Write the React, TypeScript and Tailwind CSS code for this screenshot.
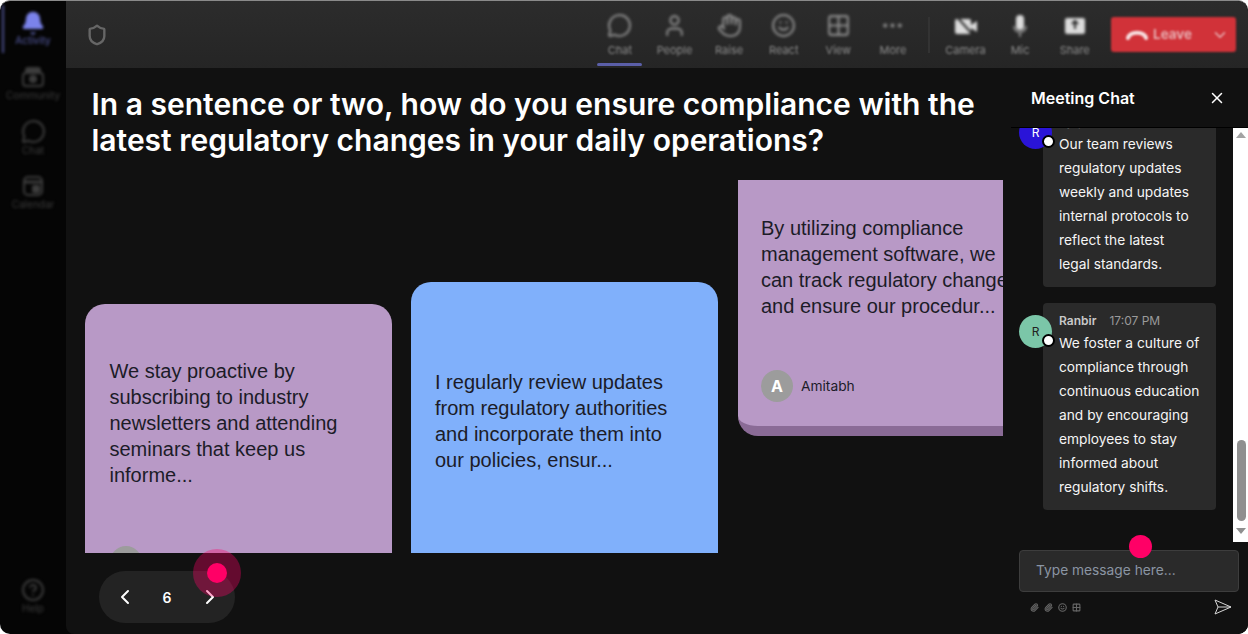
import { Bell, ChevronDown, ChevronLeft, ChevronRight, CircleHelp, Grid2x2, Hand, MessageCircle, MoreHorizontal, Paperclip, Shield, Smile, User, X } from "lucide-react";
import type { ReactNode } from "react";

const CommunityIcon = () => (
  <svg width="26" height="24" viewBox="0 0 26 24" fill="none" stroke="currentColor" strokeWidth="2">
    <path d="M6 8V5a2 2 0 0 1 2-2h10a2 2 0 0 1 2 2v3" fill="currentColor" />
    <rect x="3" y="8" width="20" height="13" rx="3" />
    <circle cx="13" cy="14" r="3" fill="currentColor" />
  </svg>
);

const CalendarIcon = () => (
  <svg width="24" height="24" viewBox="0 0 24 24" fill="none" stroke="currentColor" strokeWidth="2">
    <rect x="3" y="3" width="18" height="18" rx="4" />
    <path d="M3 8h18" strokeWidth="3" />
    <rect x="12" y="12" width="6" height="6" rx="1" fill="currentColor" />
  </svg>
);

const CameraIcon = () => (
  <svg width="26" height="24" viewBox="0 0 26 24">
    <rect x="2" y="5" width="16" height="15" rx="2" fill="#dcdcdc" />
    <path d="M18 11l6-4v11l-6-4z" fill="#dcdcdc" />
    <path d="M4 3l17 19" stroke="#2a2a2a" strokeWidth="2" />
  </svg>
);

const MicIcon = () => (
  <svg width="24" height="26" viewBox="0 0 24 26" fill="none">
    <rect x="8" y="2" width="8" height="15" rx="4" fill="#dcdcdc" />
    <path d="M6 13a6 6 0 0 0 12 0M12 19v5" stroke="#8a8a8a" strokeWidth="2" />
  </svg>
);

const ShareIcon = () => (
  <svg width="24" height="24" viewBox="0 0 24 24">
    <rect x="2" y="4" width="20" height="16" rx="2" fill="#dcdcdc" />
    <path d="M12 15V8M9 10l3-3 3 3" stroke="#2a2a2a" strokeWidth="2" fill="none" />
  </svg>
);

const HangUpIcon = () => (
  <svg width="22" height="12" viewBox="0 0 22 12" fill="none">
    <path d="M2 9c2-7 16-7 18 0" stroke="#f7dfe0" strokeWidth="4" strokeLinecap="round" />
  </svg>
);

const SendIcon = () => (
  <svg width="18" height="16" viewBox="0 0 18 16" fill="none" stroke="#d8d8d8" strokeWidth="1">
    <path d="M1 1l16 7-16 7 3-7zM4 8h13" strokeLinejoin="round" />
  </svg>
);

const sideItems = [
  { label: "Community", icon: <CommunityIcon /> },
  { label: "Chat", icon: <MessageCircle size={25} strokeWidth={2} /> },
  { label: "Calendar", icon: <CalendarIcon /> },
];

const leftTools = [
  { label: "Chat", icon: <MessageCircle size={25} strokeWidth={2} />, active: true },
  { label: "People", icon: <User size={25} strokeWidth={2} /> },
  { label: "Raise", icon: <Hand size={25} strokeWidth={2} /> },
  { label: "React", icon: <Smile size={25} strokeWidth={2} /> },
  { label: "View", icon: <Grid2x2 size={25} strokeWidth={2} /> },
  { label: "More", icon: <MoreHorizontal size={25} strokeWidth={2} /> },
];

const rightTools = [
  { label: "Camera", icon: <CameraIcon /> },
  { label: "Mic", icon: <MicIcon /> },
  { label: "Share", icon: <ShareIcon /> },
];

function Tool({ label, icon, active }: { label: string; icon: ReactNode; active?: boolean }) {
  return (
    <div className="relative flex h-[67px] w-[54.6px] flex-col items-center pt-[12px] text-[#8c8c8c]">
      <div className="flex h-[25px] items-center blur-[1.5px]">{icon}</div>
      <span className="mt-[5px] text-[11px] leading-[14px] blur-[1.2px]">{label}</span>
      {active && <div className="absolute bottom-[2px] left-[4px] h-[3px] w-[45px] rounded-sm bg-[#5b5fa8] blur-[0.4px]" />}
    </div>
  );
}

function Card({ className, text, name, gap }: { className: string; text: string; name: string; gap: string }) {
  return (
    <div className={`${className} w-[307px] shrink-0`}>
      <p className="font-['Liberation_Sans',sans-serif] text-[20px] leading-[26px] text-[#1c1c28]">{text}</p>
      <div className={`${gap} flex items-center gap-[8px]`}>
        <div className="flex h-[32px] w-[32px] items-center justify-center rounded-full bg-[#9c9c9c] text-[16px] font-bold text-white">{name[0]}</div>
        <span className="text-[13.75px] text-[#1c1c28]">{name}</span>
      </div>
    </div>
  );
}

function Message({ avatar, initialColor, name, time, lines }: { avatar: string; initialColor: string; name: string; time: string; lines: string[] }) {
  return (
    <div className="relative ml-[24px] w-[173px] rounded-[4px] bg-[#2a2a2a] pb-[11px] pl-[16px] pt-[10px]">
      <div className={`absolute -left-[24px] top-[12px] flex h-[33px] w-[33px] items-center justify-center rounded-full text-[12px] ${avatar} ${initialColor}`}>R</div>
      <div className="absolute -left-[1px] top-[31px] h-[13px] w-[13px] rounded-full border-[2px] border-black bg-white" />
      <div className="mb-[2px] flex gap-[13px] text-[12px] leading-[16px]">
        <span className="font-semibold text-[#c8c8c8]">{name}</span>
        <span className="text-[#9a9a9a]">{time}</span>
      </div>
      <div className="text-[13.75px] leading-[24px] text-[#f5f5f5]">
        {lines.map((l) => (
          <div key={l}>{l}</div>
        ))}
      </div>
    </div>
  );
}

export default function App() {
  return (
    <div className="flex h-[634px] w-[1248px] overflow-hidden rounded-[10px] border-t border-[#8a8a8a] bg-[#050505] font-['Inter',sans-serif]">
      {/* Sidebar */}
      <aside className="relative flex w-[66px] shrink-0 flex-col items-center text-[#3c3c3c] blur-[1.4px]">
        <div className="absolute left-[2px] top-[4px] h-[48px] w-[2px] bg-[#4a4e8c]" />
        <div className="flex h-[55px] flex-col items-center pt-[9px] text-[#7b83eb]">
          <Bell size={26} fill="#7b83eb" strokeWidth={1} />
          <span className="-mt-[2px] text-[10px] leading-[12px] opacity-70">Activity</span>
        </div>
        {sideItems.map((s) => (
          <div key={s.label} className="flex h-[54.5px] flex-col items-center justify-center">
            {s.icon}
            <span className="text-[10px] leading-[12px]">{s.label}</span>
          </div>
        ))}
        <div className="mt-auto flex flex-col items-center pb-[20px]">
          <CircleHelp size={24} strokeWidth={2} />
          <span className="text-[10px] leading-[12px]">Help</span>
        </div>
      </aside>

      <div className="flex min-w-0 flex-1 flex-col">
        {/* Top bar */}
        <header className="flex h-[67px] shrink-0 items-center rounded-tr-[10px] bg-gradient-to-b from-[#2c2c2c] to-[#252525] pl-[20px] pr-[12px]">
          <Shield size={22} strokeWidth={2.6} className="text-[#666] blur-[0.6px]" />
          <div className="ml-auto flex items-center">
            {leftTools.map((t) => (
              <Tool key={t.label} {...t} />
            ))}
            <div className="mx-[8px] h-[36px] w-[2px] bg-[#333] blur-[0.5px]" />
            {rightTools.map((t) => (
              <Tool key={t.label} {...t} />
            ))}
            <div className="ml-[9px] flex h-[35px] w-[125px] items-center rounded-[3px] bg-[#d13239] pl-[15px] pr-[7px] text-[#e9b9bc] blur-[1px]">
              <HangUpIcon />
              <span className="ml-[5px] text-[13.5px] font-semibold">Leave</span>
              <ChevronDown size={18} className="ml-auto" />
            </div>
          </div>
        </header>

        <div className="flex min-h-0 flex-1 bg-[#050505]">
          {/* Question and cards */}
          <main className="relative flex min-w-0 flex-1 flex-col rounded-bl-[8px] bg-[#111111]">
            <h1 className="pl-[25.5px] pr-[20px] pt-[18px] text-[30px] font-semibold leading-[36px] text-white">
              In a sentence or two, how do you ensure compliance with the latest regulatory changes in your daily operations?
            </h1>
            <div className="mt-[22px] flex h-[373px] w-[937px] gap-[19px] overflow-hidden pl-[19px]">
              <Card className="mt-[124px] h-[320px] rounded-t-[20px] bg-[#b899c6] pl-[24.5px] pr-[24px] pt-[54px]" gap="mt-[58px]" name="Amitabh" text="We stay proactive by subscribing to industry newsletters and attending seminars that keep us informe..." />
              <Card className="mt-[102px] h-[320px] rounded-t-[20px] bg-[#80b0fb] pl-[24px] pr-[24px] pt-[87px]" gap="mt-[90px]" name="Amitabh" text="I regularly review updates from regulatory authorities and incorporate them into our policies, ensur..." />
              <Card className="ml-[1px] h-[256px] rounded-b-[20px] border-b-[10px] border-[#8a6b96] bg-[#b899c6] pl-[23px] pr-[25px] pt-[35px]" gap="mt-[51px]" name="Amitabh" text="By utilizing compliance management software, we can track regulatory changes and ensure our procedur..." />
            </div>
            {/* Pager */}
            <div className="absolute bottom-[11px] left-[33px] flex h-[52px] w-[136px] items-center justify-between rounded-full bg-[#232323] px-[14px] text-white">
              <ChevronLeft size={24} />
              <span className="text-[14px] font-semibold">6</span>
              <ChevronRight size={24} className="translate-x-[1px]" />
            </div>
            <div className="absolute bottom-[37px] left-[127px] flex h-[48px] w-[48px] items-center justify-center rounded-full bg-[#ff0066]/35">
              <div className="h-[20px] w-[20px] rounded-full bg-[#ff0066]" />
            </div>
          </main>

          {/* Chat panel */}
          <section className="relative flex w-[237px] shrink-0 flex-col rounded-br-[10px] bg-[#111111]">
            <div className="z-10 flex h-[60px] shrink-0 items-center justify-between border-b border-black bg-[#111111] pl-[20px] pr-[22px]">
              <span className="text-[16px] font-semibold text-white">Meeting Chat</span>
              <X size={18} className="text-white" strokeWidth={2} />
            </div>
            <div className="relative h-[414px] shrink-0 overflow-hidden">
              <div className="absolute bottom-[32px] left-[8px] flex flex-col gap-[16px]">
                <Message avatar="bg-[#2a14d8]" initialColor="text-white" name="Ajay" time="17:06 PM" lines={["Our team reviews", "regulatory updates", "weekly and updates", "internal protocols to", "reflect the latest", "legal standards."]} />
                <Message avatar="bg-[#7bc6a8]" initialColor="text-[#222]" name="Ranbir" time="17:07 PM" lines={["We foster a culture of", "compliance through", "continuous education", "and by encouraging", "employees to stay", "informed about", "regulatory shifts."]} />
              </div>
              {/* Scrollbar */}
              <div className="absolute bottom-0 right-0 top-0 flex w-[15px] flex-col items-center bg-white">
                <div className="mt-[4px] h-0 w-0 border-x-[5px] border-b-[6px] border-x-transparent border-b-[#a3a3a3]" />
                <div className="ml-[1px] mt-[302px] h-[81px] w-[9px] rounded-full bg-[#8f8f8f]" />
                <div className="mt-[7px] h-0 w-0 border-x-[5px] border-t-[6px] border-x-transparent border-t-[#8f8f8f]" />
              </div>
            </div>
            <div className="mx-[8px] mt-[8px] flex h-[42px] w-[220px] items-center rounded-[4px] border border-[#3d3d3d] bg-[#2a2a2a] pb-[2px] pl-[16px] text-[13.75px] text-[#8a95a3]">
              Type message here...
            </div>
            <div className="flex items-center pl-[19px] pr-[16px] pt-[7px] text-[#666]">
              <div className="flex items-center gap-[5px]">
                <Paperclip size={9} strokeWidth={3} />
                <Paperclip size={9} strokeWidth={3} />
                <Smile size={9} strokeWidth={3} />
                <Grid2x2 size={9} strokeWidth={3} />
              </div>
              <div className="ml-auto">
                <SendIcon />
              </div>
            </div>
            <div className="absolute left-[118px] top-[467px] h-[23px] w-[23px] rounded-full bg-[#ff0066]" />
          </section>
        </div>
      </div>
    </div>
  );
}
